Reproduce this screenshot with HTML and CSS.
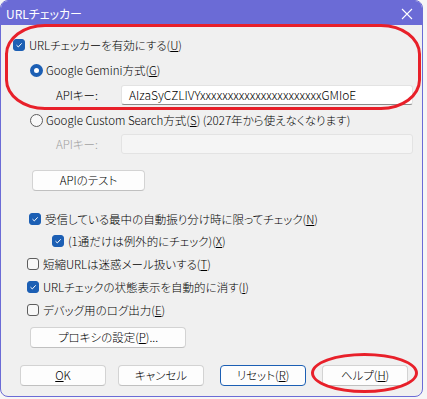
FILE: index.html
```html
<!DOCTYPE html>
<html lang="ja">
<head>
  <meta charset="UTF-8" />
  <title>URLチェッカー</title>
  <link rel="stylesheet" href="styles.css">
</head>
<body>
  <div class="window">
    <div class="titlebar">
      <span class="title">URLチェッカー</span>
      <svg class="close" width="12" height="12" viewBox="0 0 12 12">
        <path d="M1 1 L11 11 M11 1 L1 11" stroke="#fff" stroke-width="1.1" fill="none" />
      </svg>
    </div>

    <div class="content">
      <!-- 有効化 / 方式 -->
      <div class="row r-enable">
        <span class="box on"><svg viewBox="0 0 12 12"><path d="M3 6.2 L5.2 8.3 L9.2 4" /></svg></span>
        <span>URLチェッカーを有効にする(<u>U</u>)</span>
      </div>
      <div class="row r-radio">
        <span class="radio on"></span>
        <span>Google Gemini方式(<u>G</u>)</span>
      </div>
      <div class="row r-key">
        <span class="key-label">APIキー:</span>
        <div class="field">AIzaSyCZLIVYxxxxxxxxxxxxxxxxxxxxxxGMIoE</div>
      </div>
      <div class="row r-radio2">
        <span class="radio"></span>
        <span>Google Custom Search方式(<u>S</u>) (2027年から使えなくなります)</span>
      </div>
      <div class="row r-key2 disabled">
        <span class="key-label">APIキー:</span>
        <div class="field off"></div>
      </div>

      <div class="row r-test">
        <button class="btn btn-test">APIのテスト</button>
      </div>

      <!-- オプション -->
      <div class="row opt r-n">
        <span class="box on"><svg viewBox="0 0 12 12"><path d="M3 6.2 L5.2 8.3 L9.2 4" /></svg></span>
        <span>受信している最中の自動振り分け時に限ってチェック(<u>N</u>)</span>
      </div>
      <div class="row opt r-x">
        <span class="box on"><svg viewBox="0 0 12 12"><path d="M3 6.2 L5.2 8.3 L9.2 4" /></svg></span>
        <span>(1通だけは例外的にチェック)(<u>X</u>)</span>
      </div>
      <div class="row opt r-main">
        <span class="box"></span>
        <span>短縮URLは迷惑メール扱いする(<u>T</u>)</span>
      </div>
      <div class="row opt r-main">
        <span class="box on"><svg viewBox="0 0 12 12"><path d="M3 6.2 L5.2 8.3 L9.2 4" /></svg></span>
        <span>URLチェックの状態表示を自動的に消す(<u>I</u>)</span>
      </div>
      <div class="row opt r-main">
        <span class="box"></span>
        <span>デバッグ用のログ出力(<u>E</u>)</span>
      </div>

      <div class="row r-proxy">
        <button class="btn btn-proxy">プロキシの設定(<u>P</u>)...</button>
      </div>

      <div class="footer">
        <button class="btn btn-foot"><u>O</u>K</button>
        <button class="btn btn-foot">キャンセル</button>
        <button class="btn btn-foot default">リセット(<u>R</u>)</button>
        <button class="btn btn-foot">ヘルプ(<u>H</u>)</button>
      </div>
    </div>

    <!-- 赤い囲み -->
    <div class="mark mark-top"></div>
    <div class="mark mark-help"></div>
  </div>
</body>
</html>
```

FILE: styles.css
```css
* {
  box-sizing: border-box;
}

body {
  margin: 0;
  padding: 0;
  background: #f6f6f6;
  font-family: "Noto Sans CJK JP", "Noto Sans", sans-serif;
  font-size: 11.5px;
  font-weight: 300;
  font-feature-settings: "palt" 1;
  color: #000;
}

.window {
  position: relative;
  width: 423px;
  height: 397px;
  background: #f0f0f0;
  border: 1px solid #6b6bd6;
  border-radius: 8px;
  overflow: hidden;
}

.titlebar {
  height: 24px;
  background: #6b6bd6;
  color: #fff;
  display: flex;
  align-items: center;
  justify-content: space-between;
  padding: 0 9px 0 5px;
}

.title {
  font-size: 12px;
  font-weight: 400;
  line-height: 1;
  margin-top: 2px;
}

.close {
  display: block;
  margin-top: 1px;
}

.content {
  padding-top: 8px;
}

.row {
  display: flex;
  align-items: center;
  white-space: nowrap;
}

u {
  text-decoration: underline;
  text-underline-offset: 1px;
}

/* チェックボックス */
.box {
  width: 12px;
  height: 12px;
  border: 1px solid #5d5d5d;
  border-radius: 3px;
  background: #f8f8f8;
  margin-right: 4px;
  flex: none;
  display: flex;
}

.box.on {
  background: #1c5fb4;
  border-color: #1c5fb4;
}

.box svg {
  width: 10px;
  height: 10px;
  fill: none;
  stroke: #fff;
  stroke-width: 1.2;
}

/* ラジオ */
.radio {
  width: 13px;
  height: 13px;
  border: 1px solid #5d5d5d;
  border-radius: 50%;
  background: #f8f8f8;
  margin-right: 3px;
  flex: none;
}

.radio.on {
  border: 4px solid #1c5fb4;
  background: #fff;
}

.r-enable {
  height: 24px;
  padding-left: 12px;
}

.r-radio {
  height: 24px;
  margin-top: 1px;
  padding-left: 29px;
}

.r-key {
  height: 22px;
  margin-top: 2px;
  padding-left: 55px;
}

.key-label {
  width: 65px;
  flex: none;
}

.field {
  width: 292px;
  height: 20px;
  background: #fff;
  border: 1px solid #e3e3e3;
  border-bottom-color: #8b8b8b;
  border-radius: 3px;
  padding: 0 7px;
  line-height: 18px;
  font-size: 12px;
}

.r-radio2 {
  height: 24px;
  margin-top: 2px;
  padding-left: 29px;
}

.r-key2 {
  height: 20px;
  margin-top: 2px;
  padding-left: 55px;
}

.disabled {
  color: #a2a2a2;
}

.field.off {
  background: #f5f5f5;
  border-color: #e3e3e3;
}

/* ボタン */
.btn {
  font-family: inherit;
  font-size: 11.5px;
  font-weight: 300;
  font-feature-settings: "palt" 1;
  color: #000;
  background: #fdfdfd;
  border: 1px solid #d3d3d3;
  border-bottom-color: #c0c0c0;
  border-radius: 4px;
  padding: 0;
  height: 21px;
  line-height: 19px;
}

.r-test {
  margin-top: 16px;
  padding-left: 31px;
}

.btn-test {
  width: 113px;
}

.opt {
  height: 22px;
}

.r-n {
  margin-top: 17px;
  padding-left: 28px;
}

.r-x {
  padding-left: 51px;
}

.r-main {
  margin-top: 1px;
  padding-left: 26px;
}

.r-proxy {
  margin-top: 6px;
  padding-left: 29px;
}

.btn-proxy {
  width: 156px;
}

.footer {
  display: flex;
  margin-top: 17px;
  padding-left: 19px;
}

.btn-foot {
  width: 86px;
  height: 21px;
}

.btn-foot + .btn-foot {
  margin-left: 12px;
}

.btn-foot:nth-child(3) {
  margin-left: 16px;
}

.btn-foot:nth-child(4) {
  margin-left: 16px;
}

.btn-foot.default {
  border-color: #1c5fb4;
}

/* 注釈の赤丸 */
.mark {
  position: absolute;
  border: 3px solid #e8202a;
  pointer-events: none;
}

.mark-top {
  left: 4px;
  top: 23px;
  width: 416px;
  height: 86px;
  border-radius: 40px / 30px;
}

.mark-help {
  left: 310px;
  top: 352px;
  width: 107px;
  height: 40px;
  border-radius: 50%;
}
```
